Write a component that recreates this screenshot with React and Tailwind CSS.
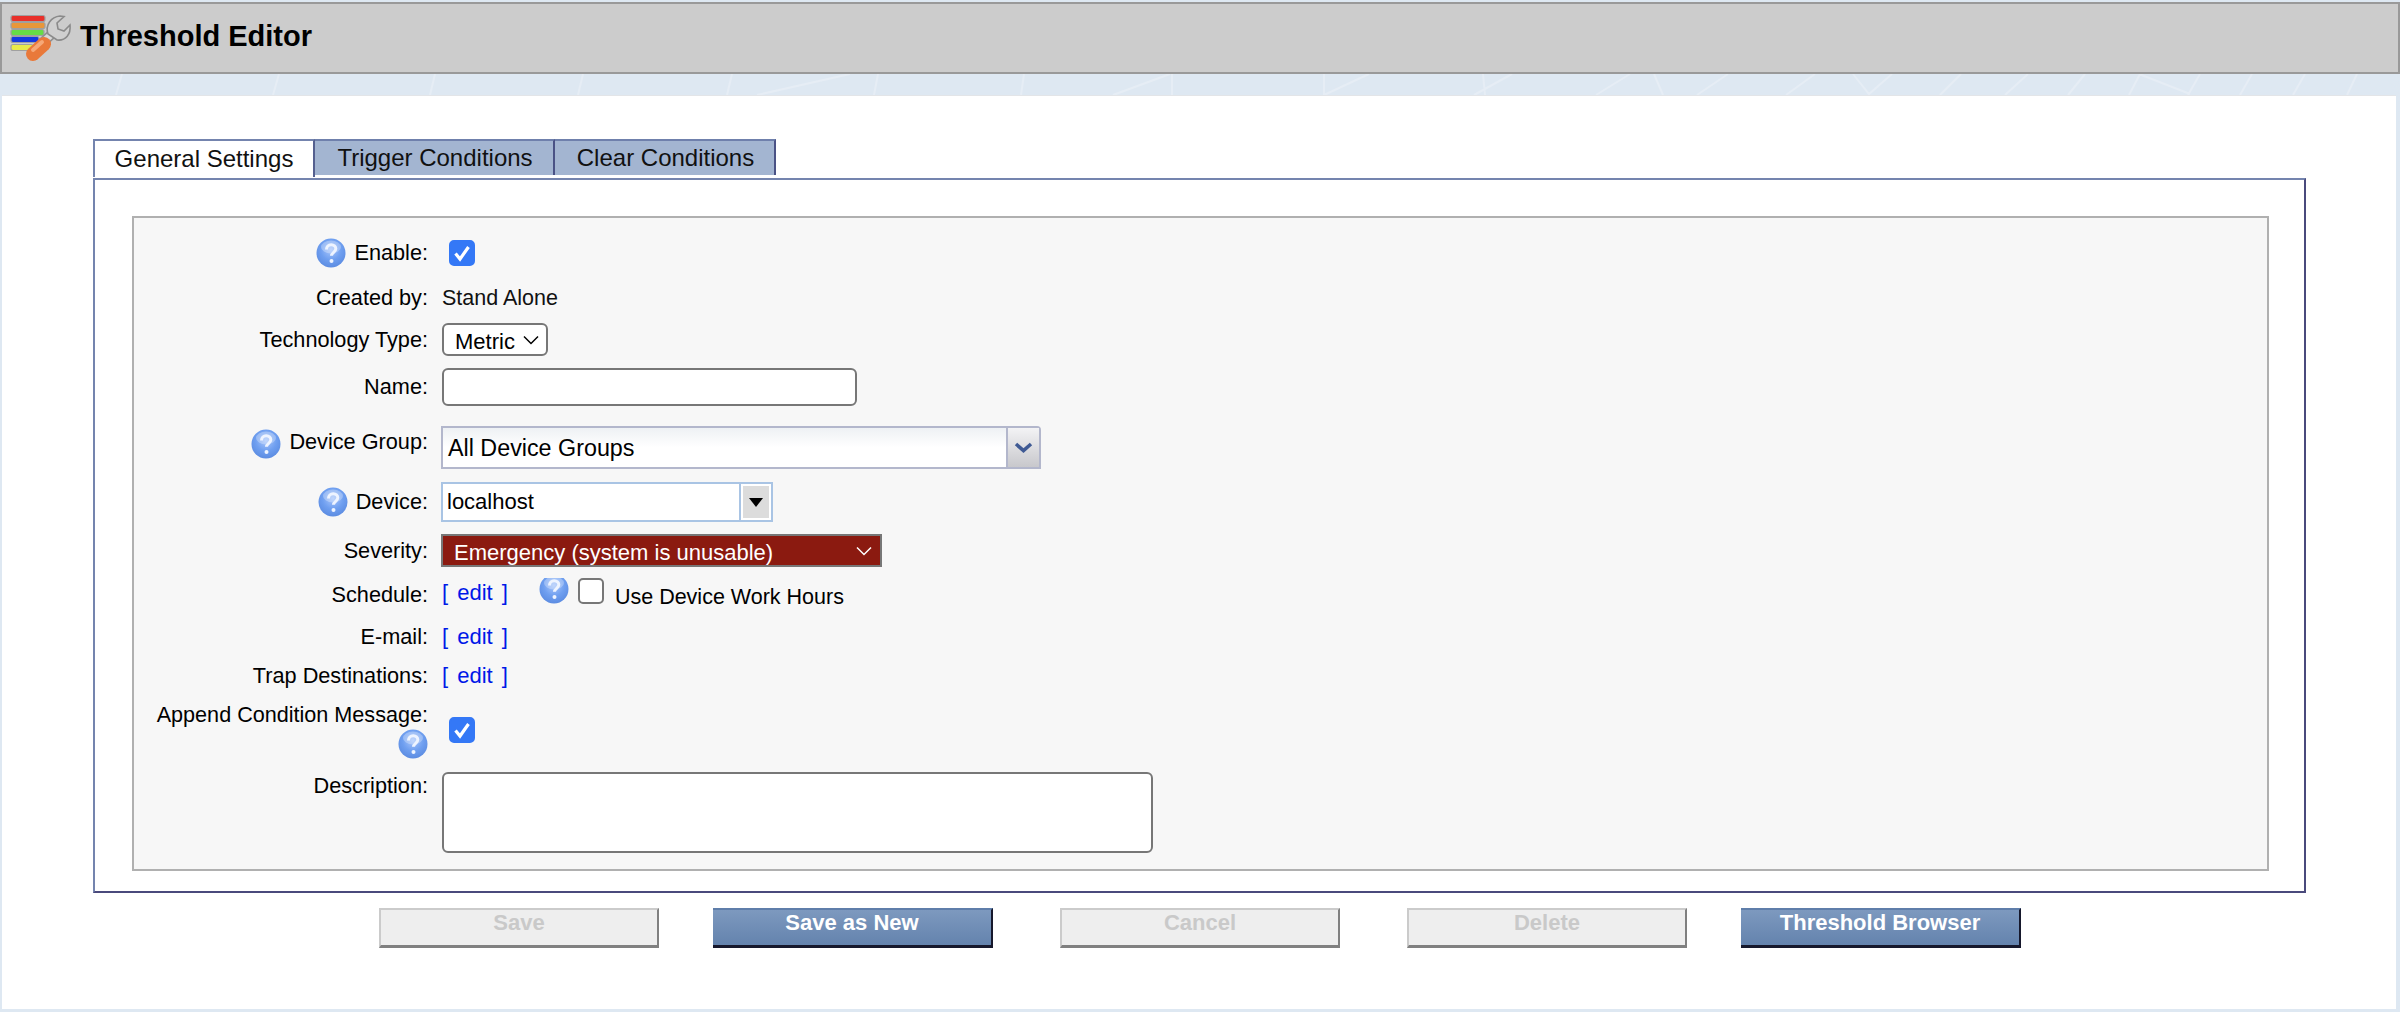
import React from 'react';

const FONT = "font-['Liberation_Sans',Arial,sans-serif]";

function HelpIcon({ className = '' }) {
  return (
    <svg viewBox="0 0 30 30" className={`w-[30px] h-[30px] shrink-0 ${className}`}>
      <defs>
        <radialGradient id="helpBall" cx="50%" cy="38%" r="65%">
          <stop offset="0%" stopColor="#a9c6fb" />
          <stop offset="55%" stopColor="#6f9ff0" />
          <stop offset="100%" stopColor="#5a8ae0" />
        </radialGradient>
      </defs>
      <circle cx="15" cy="15" r="14.5" fill="url(#helpBall)" />
      <ellipse cx="15" cy="9" rx="10" ry="6.5" fill="#ffffff" opacity="0.28" />
      <path d="M10.5 11.5c0-3 2-4.8 4.7-4.8s4.6 1.7 4.6 4.1c0 3.4-4.3 3.6-4.3 7" fill="none" stroke="#eef4ff" strokeWidth="3" />
      <circle cx="15.5" cy="23" r="2" fill="#eef4ff" />
    </svg>
  );
}

function Check({ checked = false, className = '' }) {
  return (
    <label className={`relative block w-[26px] h-[26px] shrink-0 ${className}`}>
      <input
        type="checkbox"
        defaultChecked={checked}
        className="peer appearance-none block w-[26px] h-[26px] rounded-[5px] bg-white border-2 border-[#777] checked:bg-[#3478f6] checked:border-[#3478f6]"
      />
      <svg viewBox="0 0 26 26" className="absolute inset-0 hidden peer-checked:block">
        <path d="M6.5 13.5l4.5 5.5 8.5-12" fill="none" stroke="#fff" strokeWidth="3.2" />
      </svg>
    </label>
  );
}

function Chevron({ color = '#000', className = '' }) {
  return (
    <svg viewBox="0 0 16 10" className={`absolute w-[16px] h-[10px] pointer-events-none ${className}`}>
      <path d="M1 1.5l7 7 7-7" fill="none" stroke={color} strokeWidth="1.5" />
    </svg>
  );
}

function Row({ label, help, top, className = '', labelClass = '', children }) {
  return (
    <div className={`flex ${top} ${className}`}>
      <div className={`w-[294px] shrink-0 flex justify-end items-center gap-[8px] text-[21.7px] text-black leading-[26px] ${labelClass}`}>
        {help && <HelpIcon />}
        <span>{label}</span>
      </div>
      <div className="ml-[14px] flex items-center text-[21.5px] text-[#111]">{children}</div>
    </div>
  );
}

function EditLink() {
  return <a href="#" className="text-[#0018e8] text-[22px] leading-[26px] whitespace-pre [word-spacing:3px]">{'[ edit ]'}</a>;
}

function Btn({ children, active }) {
  const look = active
    ? 'bg-gradient-to-b from-[#7d99bf] to-[#6483ad] border-t-2 border-t-[#5f7eaa] border-b-[3px] border-b-[#16182c] border-r-2 border-r-[#16182c] text-white'
    : 'bg-[#eeeeee] border-2 border-[#cbcbcb] border-r-[#808080] border-b-[3px] border-b-[#808080] text-[#c9c9c9]';
  return (
    <button
      type="button"
      className={`w-[280px] h-[40px] pb-[9px] shrink-0 text-[22px] font-bold leading-[26px] text-center ${look}`}
    >
      {children}
    </button>
  );
}

function Tab({ children, active, className = '' }) {
  const look = active
    ? 'bg-white border-l-2 border-t-2 border-l-[#7484ae] border-t-[#7484ae] border-r-2 border-r-[#55608f] h-[38px]'
    : 'bg-[#a3b5d1] border-t-2 border-t-[#6f80ac] border-r-2 border-r-[#4a5285] h-[36px]';
  return (
    <div className={`flex items-center justify-center text-[24px] leading-none text-[#111] ${look} ${className}`}>
      {children}
    </div>
  );
}

export default function App() {
  return (
    <div className={`${FONT} relative w-[2400px] h-[1012px] overflow-hidden bg-[#dee8f2]`}>
      {/* faint lines in the page background */}
      <svg viewBox="0 0 2400 96" className="absolute top-0 left-0 w-[2400px] h-[96px]">
        <g stroke="#e6edf5" strokeWidth="2" fill="none">
          <path d="M122 74l-6 21M279 74l-6 21M435 74l-5 21M583 74l-5 21M732 74l-5 21M878 74l-4 21M1024 74l-3 21M1172 74v21" />
          <path d="M850 74l-93 21M1170 74l-57 21M1324 74v21M1369 74l-45 21M1483 74l2 21M1512 74l-38 21M1630 74l-34 21M1654 74l9 21M1728 74l-31 21M1815 74l-29 21" />
          <path d="M1853 74l16 20 23-20M1961 74l-21 21M2028 74l-23 21M2085 74l-17 21M2140 74l-11 21M2139 74l51 20M2200 74l-12 21M2252 74l-12 21M2305 74l-12 21M2357 74l-10 21" />
        </g>
      </svg>

      <div className="relative pt-[2px]">
        <header className="h-[72px] bg-[#cccccc] border-2 border-[#999999] flex items-center">
          {/* threshold editor icon, drawn in page coordinates */}
          <svg viewBox="2 4 72 68" className="w-[72px] h-[68px] shrink-0">
            <g stroke="#a0a0a0" strokeWidth="1.2">
              <rect x="11" y="15.5" width="34" height="6" rx="2" fill="#e8302a" />
              <rect x="11" y="22.5" width="34" height="6" rx="2" fill="#e8973a" />
              <rect x="11" y="29.5" width="33" height="6" rx="2" fill="#66dc46" />
              <rect x="11" y="36.5" width="28" height="6" rx="2" fill="#1438e0" />
              <rect x="11" y="44.5" width="22" height="6" rx="2" fill="#eaea4a" />
            </g>
            <path d="M42 43L53 33" stroke="#8f8f8f" strokeWidth="10" />
            <path d="M42 43L53 33" stroke="#d8d8d8" strokeWidth="7" />
            <path d="M48 34C45 25 51 17 60 16L64 16.5 57 23 58 29 64 31 70 25C71 34 66 41 57 40Z" fill="#cfcfcf" stroke="#8a8a8a" strokeWidth="1.6" />
            <path d="M44 44L33 54" stroke="#e9793a" strokeWidth="14" strokeLinecap="round" />
            <path d="M42 42L33 50" stroke="#f6a878" strokeWidth="4" strokeLinecap="round" />
          </svg>
          <h1 className="ml-[6px] mt-[-3px] text-[29px] font-bold text-black leading-none">Threshold Editor</h1>
        </header>

        <main className="mt-[21px] ml-[2px] mr-[4px] h-[914px] bg-white border-t border-[#e3e5e8] pl-[91px] pt-[43px]">
          <div className="flex w-[683px] h-[38px] items-start">
            <Tab active className="w-[222px]">General Settings</Tab>
            <Tab className="w-[240px] pl-[2px]">Trigger Conditions</Tab>
            <Tab className="w-[221px] pl-[2px]">Clear Conditions</Tab>
          </div>

          <section className="mt-[1px] w-[2213px] h-[715px] border-2 border-t-[#7484ae] border-l-[#7484ae] border-r-[#4a4a7c] border-b-[#4a4a7c] pl-[37px] pt-[36px]">
            <div className="w-[2137px] h-[655px] bg-[#f7f7f7] border-2 border-[#b0b0b0] pt-[20px]">
              <Row top="" label="Enable:" help className="h-[30px]">
                <Check checked className="ml-[7px]" />
              </Row>
              <Row top="mt-[16px]" label="Created by:" className="h-[28px]">
                <span>Stand Alone</span>
              </Row>
              <Row top="mt-[11px]" label="Technology Type:" className="h-[33px]">
                <div className="relative w-[106px] h-[33px]">
                  <select className="appearance-none w-full h-full bg-white border-2 border-[#777] rounded-[6px] pl-[11px] text-[22px] text-black outline-none">
                    <option>Metric</option>
                  </select>
                  <Chevron className="right-[9px] top-[12px]" />
                </div>
              </Row>
              <Row top="mt-[12px]" label="Name:" className="h-[38px]">
                <input type="text" className="w-[415px] h-[38px] bg-white border-2 border-[#777] rounded-[6px] outline-none" />
              </Row>
              <Row top="mt-[20px]" label="Device Group:" help className="h-[43px]" labelClass="items-start pt-[3px]">
                <div className="ml-[-1px] w-[600px] h-[43px] flex border-2 border-[#b3b7cc] rounded-tr-[4px] bg-gradient-to-b from-[#eef1f4] via-white to-white">
                  <span className="flex-1 pl-[5px] text-[23.3px] leading-[39px] mt-[1px] text-black">All Device Groups</span>
                  <div className="w-[33px] border-l-2 border-[#b3b7cc] bg-gradient-to-b from-[#f3f3f5] to-[#c8c8cc] flex justify-center pt-[14px]">
                    <svg viewBox="0 0 19 11" className="w-[19px] h-[11px]">
                      <path d="M2 2l7.5 6.5L17 2" fill="none" stroke="#3f5a94" strokeWidth="3.6" />
                    </svg>
                  </div>
                </div>
              </Row>
              <Row top="mt-[13px]" label="Device:" help className="h-[40px]">
                <div className="ml-[-1px] w-[332px] h-[40px] flex border-2 border-[#a9c4e4] bg-white">
                  <span className="flex-1 pl-[4px] leading-[36px] text-[22px] text-black">localhost</span>
                  <div className="w-[32px] border-l-2 border-[#a9c4e4] p-[2px] bg-white">
                    <div className="w-full h-full bg-[#dcdcdc] flex items-center justify-center">
                      <svg viewBox="0 0 14 9" className="w-[14px] h-[9px]">
                        <path d="M0 0h14L7 9z" fill="#000" />
                      </svg>
                    </div>
                  </div>
                </div>
              </Row>
              <Row top="mt-[12px]" label="Severity:" className="h-[33px]">
                <div className="ml-[-1px] relative w-[441px] h-[33px]">
                  <select className="appearance-none w-full h-full bg-[#8b1a10] border-2 border-[#777] pl-[11px] text-[22px] text-white outline-none">
                    <option>Emergency (system is unusable)</option>
                  </select>
                  <Chevron color="#fff" className="right-[10px] top-[12px]" />
                </div>
              </Row>
              <Row top="mt-[11px]" label="Schedule:" className="h-[30px]" labelClass="pt-[3px]">
                <EditLink />
                <div className="ml-[31px] h-[26px] overflow-hidden self-start">
                  <HelpIcon className="mt-[-4px]" />
                </div>
                <Check className="ml-[9px] self-start" />
                <span className="ml-[11px] text-black leading-[26px] mt-[6px] self-start">Use Device Work Hours</span>
              </Row>
              <Row top="mt-[14px]" label="E-mail:" className="h-[30px]">
                <EditLink />
              </Row>
              <Row top="mt-[9px]" label="Trap Destinations:" className="h-[30px]">
                <EditLink />
              </Row>
              <div className="flex mt-[9px] h-[60px]">
                <div className="w-[294px] shrink-0 flex flex-col items-end text-[21.6px] leading-[26px] text-black">
                  <span className="mt-[2px]">Append Condition Message:</span>
                  <HelpIcon className="mt-[1px]" />
                </div>
                <div className="ml-[21px] mt-[17px]">
                  <Check checked />
                </div>
              </div>
              <div className="flex mt-[12px] h-[81px]">
                <div className="w-[294px] shrink-0 text-right text-[21.7px] leading-[26px] text-black pt-[1px]">Description:</div>
                <textarea className="ml-[14px] w-[711px] h-[81px] bg-white border-2 border-[#777] rounded-[6px] outline-none resize-none" />
              </div>
            </div>
          </section>

          <div className="mt-[15px] ml-[286px] flex">
            <Btn>Save</Btn>
            <div className="ml-[54px]"><Btn active>Save as New</Btn></div>
            <div className="ml-[67px]"><Btn>Cancel</Btn></div>
            <div className="ml-[67px]"><Btn>Delete</Btn></div>
            <div className="ml-[54px]"><Btn active>Threshold Browser</Btn></div>
          </div>
        </main>
      </div>
    </div>
  );
}
